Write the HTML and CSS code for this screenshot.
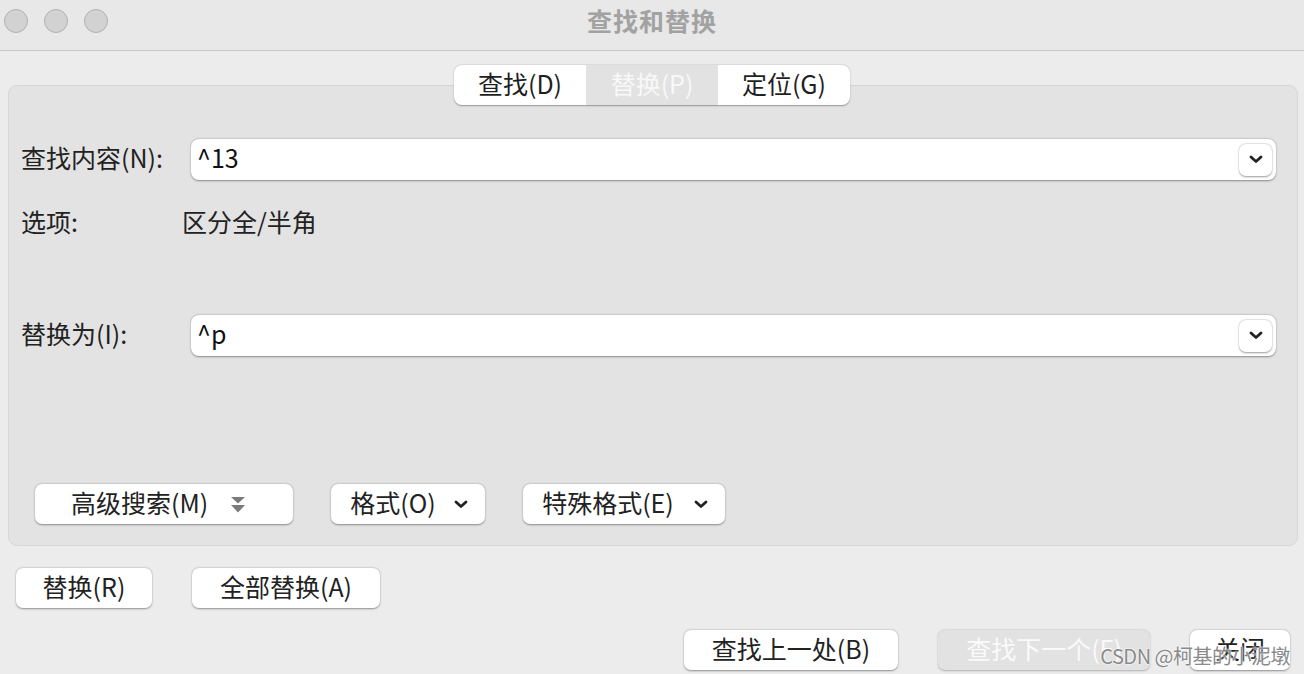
FILE: index.html
```html
<!DOCTYPE html>
<html lang="zh">
<head>
<meta charset="utf-8">
<title>查找和替换</title>
<link rel="stylesheet" href="styles.css">
</head>
<body>
<div class="window">
  <div class="titlebar">
    <div class="lights">
      <span class="light"></span>
      <span class="light"></span>
      <span class="light"></span>
    </div>
    <div class="title">查找和替换</div>
  </div>

  <div class="content">
    <div class="tabs">
      <div class="tab">查找(D)</div>
      <div class="tab selected">替换(P)</div>
      <div class="tab">定位(G)</div>
    </div>

    <div class="group">
      <div class="row find-row">
        <div class="label">查找内容(N):</div>
        <div class="combo">
          <span class="combo-text">^13</span>
          <span class="combo-btn">
            <svg width="14" height="9" viewBox="0 0 14 9"><path d="M2 2 L7 6.5 L12 2" fill="none" stroke="#222" stroke-width="2.8" stroke-linecap="round" stroke-linejoin="round"/></svg>
          </span>
        </div>
      </div>

      <div class="row options-row">
        <div class="label opt-label">选项:</div>
        <div class="opt-value">区分全/半角</div>
      </div>

      <div class="row replace-row">
        <div class="label">替换为(I):</div>
        <div class="combo">
          <span class="combo-text">^p</span>
          <span class="combo-btn">
            <svg width="14" height="9" viewBox="0 0 14 9"><path d="M2 2 L7 6.5 L12 2" fill="none" stroke="#222" stroke-width="2.8" stroke-linecap="round" stroke-linejoin="round"/></svg>
          </span>
        </div>
      </div>

      <div class="row group-buttons">
        <div class="btn btn-adv">
          <span class="btn-label">高级搜索(M)</span>
          <svg class="dbl" width="16" height="18" viewBox="0 0 16 18"><path d="M1 1 H15 L8 7.5 Z" fill="#7a7a7a"/><path d="M1 9 H15 L8 16.5 Z" fill="#7a7a7a"/></svg>
        </div>
        <div class="btn btn-fmt">
          <span class="btn-label">格式(O)</span>
          <svg width="14" height="9" viewBox="0 0 14 9"><path d="M2 2 L7 6.5 L12 2" fill="none" stroke="#222" stroke-width="2.8" stroke-linecap="round" stroke-linejoin="round"/></svg>
        </div>
        <div class="btn btn-special">
          <span class="btn-label">特殊格式(E)</span>
          <svg width="14" height="9" viewBox="0 0 14 9"><path d="M2 2 L7 6.5 L12 2" fill="none" stroke="#222" stroke-width="2.8" stroke-linecap="round" stroke-linejoin="round"/></svg>
        </div>
      </div>
    </div>

    <div class="replace-buttons">
      <div class="btn btn-rep"><span class="btn-label">替换(R)</span></div>
      <div class="btn btn-repall"><span class="btn-label">全部替换(A)</span></div>
    </div>

    <div class="bottom-buttons">
      <div class="btn btn-prev"><span class="btn-label">查找上一处(B)</span></div>
      <div class="btn btn-next disabled"><span class="btn-label">查找下一个(F)</span></div>
      <div class="btn btn-close"><span class="btn-label">关闭</span></div>
    </div>
  </div>
  <div class="watermark">CSDN @柯基的小泥墩</div>
</div>
</body>
</html>
```

FILE: styles.css
```css
* { box-sizing: border-box; }

html, body {
  margin: 0;
  padding: 0;
}

body {
  width: 1304px;
  height: 674px;
  overflow: hidden;
  background: #ececec;
  font-family: "Noto Sans CJK SC", "Noto Sans", sans-serif;
  color: #222;
}

.window {
  position: relative;
  width: 1304px;
  height: 674px;
}

.titlebar {
  position: relative;
  height: 51px;
  background: #e8e8e8;
  border-bottom: 1px solid #c9c9c9;
  display: flex;
  align-items: center;
  justify-content: center;
}

.lights {
  position: absolute;
  left: 4px;
  top: 9px;
  display: flex;
  gap: 16px;
}

.light {
  width: 24px;
  height: 24px;
  border-radius: 50%;
  background: #d2d2d2;
  border: 1px solid #b2b2b2;
}

.title {
  font-size: 25px;
  font-weight: 700;
  color: #a2a2a2;
  line-height: 30px;
  margin-top: -10px;
  letter-spacing: 1px;
}

.content {
  padding-top: 14px;
}

.tabs {
  position: relative;
  z-index: 1;
  width: 396px;
  height: 40px;
  margin-left: 454px;
  display: flex;
  background: #fff;
  border-radius: 8px;
  box-shadow: 0 0.5px 1.5px rgba(0,0,0,0.35);
  overflow: hidden;
}

.tab {
  flex: 1;
  display: flex;
  align-items: center;
  justify-content: center;
  font-size: 25px;
  line-height: 30px;
  padding-bottom: 5px;
  color: #1f1f1f;
}

.tab.selected {
  background: #e2e2e2;
  color: #f8f8f8;
}

.group {
  margin: -20px 6px 0 8px;
  height: 461px;
  background: #e3e3e3;
  border: 1px solid #d7d7d7;
  border-radius: 9px;
  padding: 53px 21px 0 12px;
}

.row {
  display: flex;
  align-items: center;
}

.label {
  width: 170px;
  font-size: 25px;
  line-height: 30px;
  padding-bottom: 5px;
  flex-shrink: 0;
}

.combo {
  flex: 1;
  height: 41px;
  background: #fff;
  border-radius: 8px;
  box-shadow: 0 0.5px 2px rgba(0,0,0,0.4);
  display: flex;
  align-items: center;
  padding: 0 4px 0 6px;
}

.combo-text {
  flex: 1;
  font-size: 25px;
  line-height: 30px;
  padding-bottom: 5px;
  color: #111;
}

.combo-btn {
  width: 33px;
  height: 32px;
  border-radius: 7px;
  background: #fff;
  box-shadow: 0 0.5px 2px rgba(0,0,0,0.4);
  display: flex;
  align-items: center;
  justify-content: center;
}

.options-row {
  margin-top: 28px;
  height: 30px;
}

.opt-label {
  width: 161px;
}

.opt-value {
  font-size: 25px;
  line-height: 30px;
  padding-bottom: 5px;
}

.replace-row {
  margin-top: 77px;
}

.group-buttons {
  margin-top: 128px;
  margin-left: 14px;
  gap: 38px;
}

.btn {
  height: 40px;
  background: #fff;
  border-radius: 7px;
  box-shadow: 0 0.5px 2px rgba(0,0,0,0.4);
  display: flex;
  align-items: center;
  justify-content: center;
  font-size: 25px;
  color: #222;
}

.btn-label {
  line-height: 30px;
  padding-bottom: 5px;
}

.btn-adv {
  width: 258px;
  gap: 22px;
  justify-content: flex-start;
  padding-left: 36px;
}

.btn-adv .dbl { margin-top: 1px; }

.btn-fmt {
  width: 154px;
  gap: 18px;
  padding-left: 2px;
}

.btn-special {
  width: 202px;
  gap: 20px;
  padding-left: 2px;
}

.replace-buttons {
  display: flex;
  gap: 40px;
  margin: 22px 0 0 16px;
}

.btn-rep { width: 136px; }
.btn-repall { width: 188px; }

.bottom-buttons {
  display: flex;
  justify-content: flex-end;
  gap: 40px;
  margin: 22px 14px 0 0;
}

.btn-prev { width: 214px; }
.btn-next { width: 212px; }
.btn-close { width: 100px; }

.btn.disabled {
  background: #e2e2e2;
  color: #fafafa;
  box-shadow: 0 0.5px 2px rgba(0,0,0,0.25);
}

.watermark {
  position: absolute;
  right: 14px;
  bottom: 6px;
  font-size: 20px;
  line-height: 24px;
  color: #8a8a8a;
  text-shadow: 0 0 2px #fff, 0 0 2px #fff;
  letter-spacing: -0.5px;
}
```
